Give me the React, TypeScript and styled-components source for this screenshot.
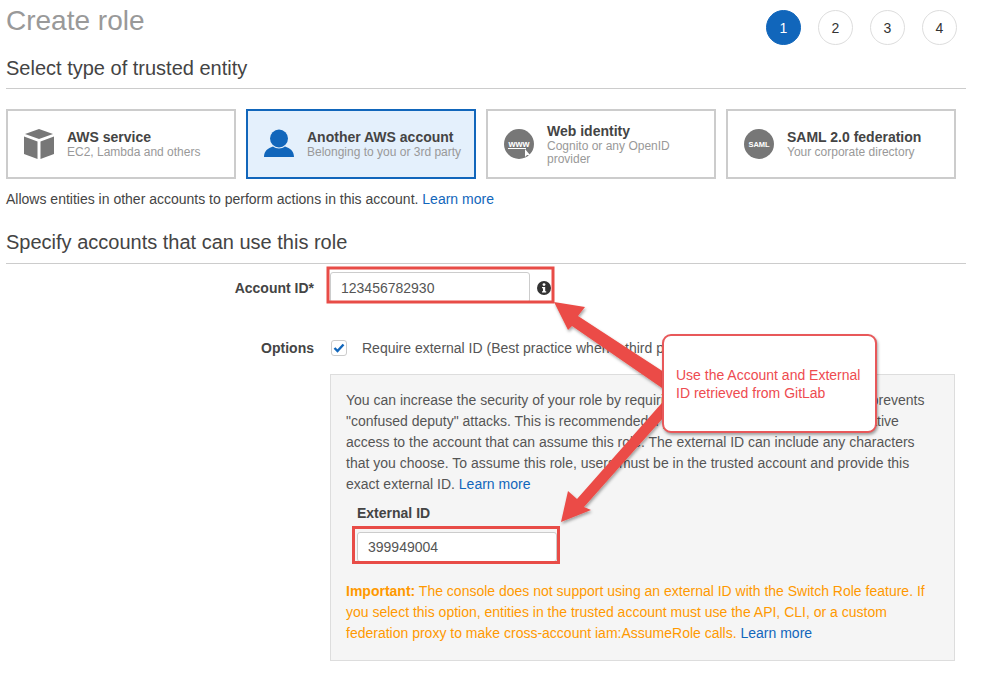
import styled, { createGlobalStyle } from 'styled-components';

const GlobalStyle = createGlobalStyle`
  html, body {
    margin: 0;
    padding: 0;
    background: #fff;
  }
  body {
    font-family: "Liberation Sans", Arial, sans-serif;
    font-size: 14px;
    color: #444;
  }
`;

const Page = styled.div`
  position: relative;
  width: 985px;
  height: 675px;
  overflow: hidden;
  padding: 0 19px 0 6px;
  box-sizing: border-box;
`;

const TopRow = styled.div`
  display: flex;
  justify-content: space-between;
  height: 54px;
  padding: 10px 9px 0 0;
  box-sizing: border-box;
`;

const Title = styled.h1`
  margin: -10px 0 0;
  font-size: 28px;
  line-height: 42px;
  font-weight: 400;
  color: #999;
`;

const Steps = styled.div`
  display: flex;
  gap: 17px;
`;

const Step = styled.div<{ $active?: boolean }>`
  width: 35px;
  height: 35px;
  box-sizing: border-box;
  border-radius: 50%;
  display: flex;
  align-items: center;
  justify-content: center;
  font-size: 14px;
  color: ${(p) => (p.$active ? '#fff' : '#333')};
  background: ${(p) => (p.$active ? '#1166bb' : '#fff')};
  border: 1px solid ${(p) => (p.$active ? '#1166bb' : '#ddd')};
`;

const SectionHeading = styled.h2`
  margin: 0;
  height: 34px;
  font-size: 20px;
  line-height: 28px;
  font-weight: 400;
  color: #444;
  border-bottom: 1px solid #ccc;
`;

const Cards = styled.div`
  display: flex;
  gap: 10px;
  margin-top: 20px;
`;

const Card = styled.div<{ $selected?: boolean }>`
  width: 230px;
  height: 70px;
  box-sizing: border-box;
  display: flex;
  align-items: center;
  gap: 13px;
  padding-left: 16px;
  border: 2px solid ${(p) => (p.$selected ? '#1166bb' : '#ccc')};
  background: ${(p) => (p.$selected ? '#e4f0fc' : '#fff')};
`;

const CardIcon = styled.svg`
  flex: none;
  width: 30px;
  height: 30px;
`;

const CardTitle = styled.div`
  font-size: 14px;
  line-height: 16px;
  font-weight: 700;
  color: #444;
`;

const CardDesc = styled.div`
  margin-top: 1px;
  font-size: 12px;
  line-height: 13px;
  color: #999;
`;

const Hint = styled.p`
  margin: 12px 0 0;
  font-size: 14px;
  line-height: 16px;
  color: #444;
`;

const Link = styled.a`
  color: #1166bb;
  text-decoration: none;
`;

const SecondHeading = styled(SectionHeading)`
  margin-top: 20px;
  height: 36px;
  line-height: 30px;
`;

const FormRow = styled.div<{ $top: number }>`
  display: flex;
  align-items: center;
  margin-top: ${(p) => p.$top}px;
`;

const FieldLabel = styled.label`
  width: 308px;
  flex: none;
  text-align: right;
  font-weight: 700;
  color: #444;
`;

const InputBox = styled.div<{ $width: number }>`
  width: ${(p) => p.$width}px;
  height: 31px;
  box-sizing: border-box;
  display: flex;
  align-items: center;
  padding-left: 10px;
  background: #fff;
  border: 1px solid #ccc;
  border-radius: 3px;
  color: #555;
`;

const AccountInput = styled(InputBox)`
  margin-left: 16px;
`;

const InfoIcon = styled.svg`
  width: 14px;
  height: 14px;
  margin-left: 7px;
`;

const Check = styled.div`
  width: 16px;
  height: 16px;
  margin-left: 17px;
  box-sizing: border-box;
  border: 1px solid #ccc;
  border-radius: 3px;
  display: flex;
  align-items: center;
  justify-content: center;
`;

const CheckText = styled.span`
  margin-left: 15px;
  white-space: nowrap;
  color: #555;
`;

const InfoPanel = styled.div`
  width: 625px;
  height: 287px;
  margin: 18px 0 0 324px;
  padding: 15px 15px 0;
  box-sizing: border-box;
  background: #f5f5f5;
  border: 1px solid #ddd;
  font-size: 14px;
  line-height: 21px;
  color: #555;
`;

const PanelText = styled.p`
  margin: 0;
`;

const ExternalLabel = styled.div`
  margin: 8px 0 0 11px;
  font-weight: 700;
  color: #444;
`;

const ExternalInput = styled(InputBox)`
  margin: 8px 0 0 11px;
  height: 30px;
`;

const Warning = styled.p`
  margin: 19px 0 0;
  color: #ff9900;
`;

const Annotations = styled.svg`
  position: absolute;
  inset: 0;
  width: 985px;
  height: 675px;
  pointer-events: none;
`;

const Callout = styled.div`
  position: absolute;
  left: 662px;
  top: 334px;
  width: 215px;
  height: 99px;
  box-sizing: border-box;
  display: flex;
  align-items: center;
  padding: 0 12px;
  background: #fff;
  border: 2px solid #e8585a;
  border-radius: 9px;
  box-shadow: 1px 2px 3px rgba(0, 0, 0, 0.35);
  font-size: 14px;
  line-height: 18px;
  color: #ee4b50;
`;

function Pair({ title, desc }: { title: string; desc: string }) {
  return (
    <div>
      <CardTitle>{title}</CardTitle>
      <CardDesc>{desc}</CardDesc>
    </div>
  );
}

function App() {
  return (
    <>
      <GlobalStyle />
      <Page>
        <TopRow>
          <Title>Create role</Title>
          <Steps>
            <Step $active>1</Step>
            <Step>2</Step>
            <Step>3</Step>
            <Step>4</Step>
          </Steps>
        </TopRow>
        <SectionHeading>Select type of trusted entity</SectionHeading>

        <Cards>
          <Card>
            <CardIcon viewBox="0 0 30 30">
              <path d="M15 0 L29 5 L15 10 L1 5 Z" fill="#777" />
              <path d="M0 7.5 L13.5 12.5 L13.5 30 L0 25 Z" fill="#777" />
              <path d="M30 7.5 L16.5 12.5 L16.5 30 L30 25 Z" fill="#777" />
            </CardIcon>
            <Pair title="AWS service" desc="EC2, Lambda and others" />
          </Card>
          <Card $selected>
            <CardIcon viewBox="0 0 30 30">
              <circle cx="15" cy="9.5" r="9" fill="#1166bb" />
              <path d="M0 28 C0 22 4 19 9 17.5 C12 20 18 20 21 17.5 C26 19 30 22 30 28 Z" fill="#1166bb" />
            </CardIcon>
            <Pair title="Another AWS account" desc="Belonging to you or 3rd party" />
          </Card>
          <Card>
            <CardIcon viewBox="0 0 30 30">
              <circle cx="15" cy="15" r="15" fill="#777" />
              <text x="15" y="18" textAnchor="middle" fontSize="9" fontWeight="700" fill="#fff" fontFamily="Liberation Sans">
                www
              </text>
              <path d="M4 19.5 H22" stroke="#fff" strokeWidth="1" />
              <path d="M21 20 L21 28 L23 26 L26 26 Z" fill="#fff" />
            </CardIcon>
            <Pair title="Web identity" desc="Cognito or any OpenID provider" />
          </Card>
          <Card>
            <CardIcon viewBox="0 0 30 30">
              <circle cx="15" cy="15" r="15" fill="#777" />
              <text x="15" y="18" textAnchor="middle" fontSize="7.5" fontWeight="700" fill="#fff" fontFamily="Liberation Sans">
                SAML
              </text>
            </CardIcon>
            <Pair title="SAML 2.0 federation" desc="Your corporate directory" />
          </Card>
        </Cards>

        <Hint>
          Allows entities in other accounts to perform actions in this account. <Link>Learn more</Link>
        </Hint>

        <SecondHeading>Specify accounts that can use this role</SecondHeading>

        <FormRow $top={8}>
          <FieldLabel>Account ID*</FieldLabel>
          <AccountInput $width={200}>123456782930</AccountInput>
          <InfoIcon viewBox="0 0 14 14">
            <circle cx="7" cy="7" r="7" fill="#333" />
            <circle cx="7" cy="3.6" r="1.4" fill="#fff" />
            <path d="M5 6 H8.2 V10.2 H9.2 V11.4 H5 V10.2 H6 V7.2 H5 Z" fill="#fff" />
          </InfoIcon>
        </FormRow>

        <FormRow $top={37}>
          <FieldLabel>Options</FieldLabel>
          <Check>
            <svg width="12" height="10" viewBox="0 0 12 10">
              <path d="M1.5 5 L4.5 8 L10.5 1.5" fill="none" stroke="#1166bb" strokeWidth="2.4" />
            </svg>
          </Check>
          <CheckText>Require external ID (Best practice when a third party will assume this role)</CheckText>
        </FormRow>

        <InfoPanel>
          <PanelText>
            You can increase the security of your role by requiring an optional external ID, which prevents
            "confused deputy" attacks. This is recommended if you do not own or have administrative access to
            the account that can assume this role. The external ID can include any characters that you choose.
            To assume this role, users must be in the trusted account and provide this exact external ID.{' '}
            <Link>Learn more</Link>
          </PanelText>
          <ExternalLabel>External ID</ExternalLabel>
          <ExternalInput $width={200}>399949004</ExternalInput>
          <Warning>
            <strong>Important:</strong> The console does not support using an external ID with the Switch Role
            feature. If you select this option, entities in the trusted account must use the API, CLI, or a
            custom federation proxy to make cross-account iam:AssumeRole calls. <Link>Learn more</Link>
          </Warning>
        </InfoPanel>

        <Annotations viewBox="0 0 985 675">
          <defs>
            <filter id="arrowShadow" x="-10%" y="-10%" width="120%" height="120%">
              <feDropShadow dx="1" dy="2" stdDeviation="1.5" floodColor="#000" floodOpacity="0.35" />
            </filter>
          </defs>
          <rect x="328" y="268" width="225" height="34" fill="none" stroke="#e84c47" strokeWidth="3" />
          <rect x="353.5" y="527.5" width="205" height="35" fill="none" stroke="#e84c47" strokeWidth="3" />
          <g fill="#eb4c46" filter="url(#arrowShadow)">
            <path d="M554 302 L585 307 L578 316 L670 376 L662 388 L572 326 L568 330 Z" />
            <path d="M561 522 L568 491 L577 499 L668 396 L672 408 L584 507 L591 510 Z" />
          </g>
        </Annotations>
        <Callout>Use the Account and External ID retrieved from GitLab</Callout>
      </Page>
    </>
  );
}

export default App;
